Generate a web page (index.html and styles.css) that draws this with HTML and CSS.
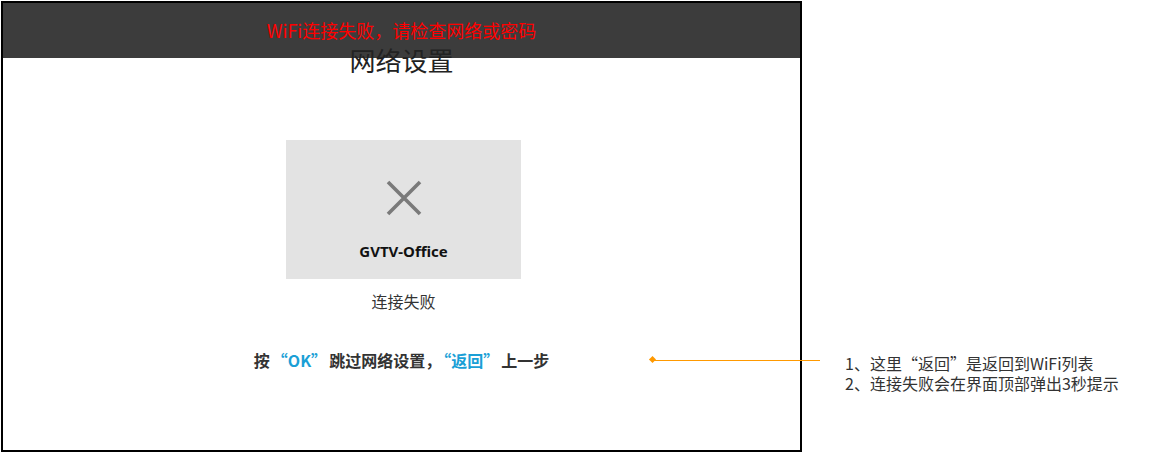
FILE: index.html
```html
<!DOCTYPE html>
<html lang="zh">
<head>
<meta charset="utf-8">
<title>网络设置</title>
<link rel="stylesheet" href="styles.css">
</head>
<body>
<div class="page">
  <div class="device">
    <div class="toast">WiFi连接失败，请检查网络或密码</div>
    <h1 class="title">网络设置</h1>
    <div class="card">
      <svg class="fail-icon" width="36" height="36" viewBox="0 0 36 36" aria-hidden="true">
        <path d="M2 2 L34 34 M34 2 L2 34" stroke="#7a7a7a" stroke-width="3.6" stroke-linecap="butt" fill="none"/>
      </svg>
      <div class="ssid">GVTV-Office</div>
    </div>
    <div class="status">连接失败</div>
    <div class="hint">按<span class="key">“OK”</span>跳过网络设置，<span class="key">“返回”</span>上一步</div>
  </div>
  <div class="note">
    <span class="connector"><span class="dot"></span></span>
    <p>1、这里“返回”是返回到WiFi列表</p>
    <p>2、连接失败会在界面顶部弹出3秒提示</p>
  </div>
</div>
</body>
</html>
```

FILE: styles.css
```css
html, body {
  margin: 0;
  padding: 0;
  background: #ffffff;
}

body {
  font-family: "Noto Sans CJK SC", "Noto Sans", sans-serif;
  color: #333333;
}

.page {
  display: flex;
  align-items: flex-start;
  padding: 1px 0 0 1px;
}

.device {
  position: relative;
  box-sizing: border-box;
  width: 801px;
  height: 451px;
  border: 2px solid #000000;
  display: flex;
  flex-direction: column;
  align-items: center;
  flex-shrink: 0;
}

.toast {
  position: absolute;
  top: 0;
  left: 0;
  right: 0;
  height: 55px;
  background: #3c3c3c;
  color: #ff0000;
  font-size: 18px;
  line-height: 24px;
  display: flex;
  align-items: center;
  justify-content: center;
  padding-bottom: 1px;
  box-sizing: border-box;
}

.title {
  position: relative;
  z-index: 1;
  margin: 40px 0 0;
  font-size: 26px;
  line-height: 34px;
  font-weight: normal;
  color: #222222;
}

.card {
  margin-top: 63px;
  margin-left: 4px;
  width: 235px;
  height: 139px;
  background: #e3e3e3;
  display: flex;
  flex-direction: column;
  align-items: center;
  box-sizing: border-box;
  padding-top: 40px;
}

.fail-icon {
  display: block;
}

.ssid {
  margin-top: 25px;
  font-family: "Noto Sans", "Noto Sans CJK SC", sans-serif;
  font-size: 15px;
  line-height: 20px;
  font-weight: bold;
  color: #111111;
}

.status {
  margin-top: 12px;
  margin-left: 4px;
  font-size: 16px;
  line-height: 20px;
  color: #333333;
}

.hint {
  margin-top: 39px;
  font-size: 16px;
  line-height: 20px;
  font-weight: bold;
  color: #333333;
}

.key {
  color: #1a9fd6;
  margin: 0 2px;
}

.note {
  position: relative;
  margin: 352px 0 0 43px;
  font-size: 16px;
  line-height: 20px;
  color: #333333;
}

.note p {
  margin: 0;
  white-space: nowrap;
}

.connector {
  position: absolute;
  left: -194px;
  top: 7px;
  width: 169px;
  height: 1px;
  background: #ff9900;
}

.connector .dot {
  position: absolute;
  left: -1px;
  top: -3px;
  width: 5px;
  height: 5px;
  background: #ff9900;
  transform: rotate(45deg);
}
```
